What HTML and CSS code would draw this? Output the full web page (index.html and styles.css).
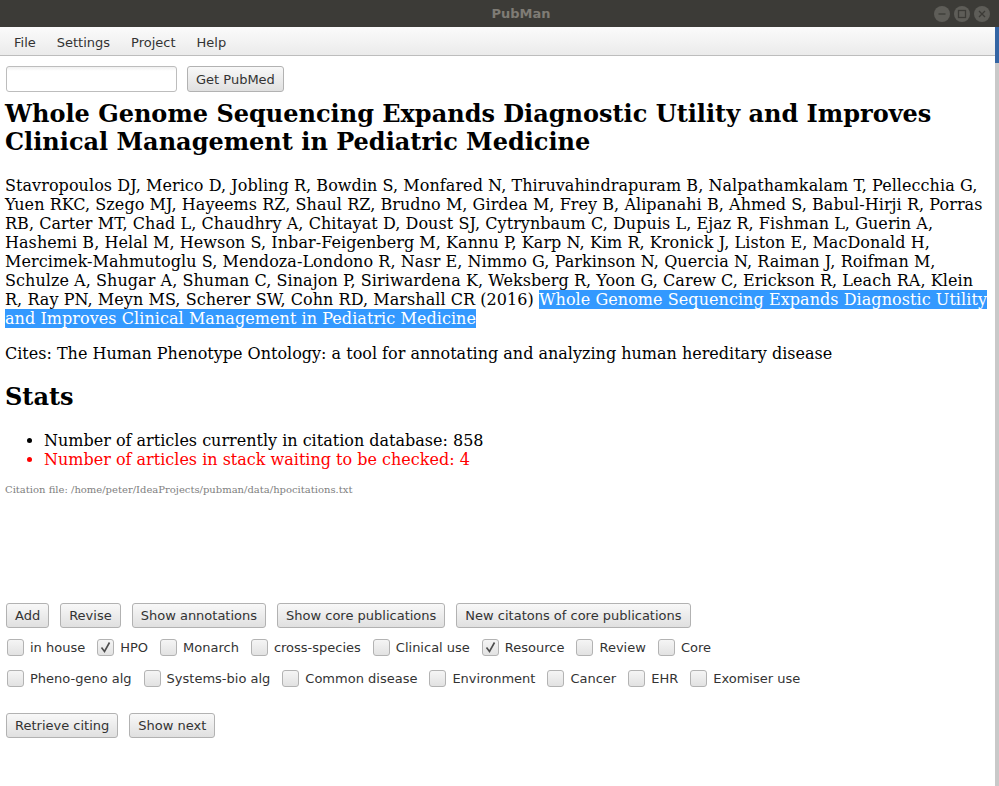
FILE: index.html
```html
<!DOCTYPE html>
<html>
<head>
<meta charset="utf-8">
<title>PubMan</title>
<link rel="stylesheet" href="styles.css">
</head>
<body>
<div class="screen">
  <div class="window">
    <div class="titlebar">
      <span class="title">PubMan</span>
      <div class="wbtns">
        <span class="wbtn"><svg width="16" height="16" viewBox="0 0 16 16"><path d="M4.5 8h7" stroke="#3c3b37" stroke-width="1.3"/></svg></span>
        <span class="wbtn"><svg width="16" height="16" viewBox="0 0 16 16"><rect x="4.5" y="4.5" width="7" height="7" fill="none" stroke="#3c3b37" stroke-width="1.3"/></svg></span>
        <span class="wbtn"><svg width="16" height="16" viewBox="0 0 16 16"><path d="M5 5l6 6M11 5l-6 6" stroke="#3c3b37" stroke-width="1.3"/></svg></span>
      </div>
    </div>
    <div class="menubar">
      <span class="menu">File</span>
      <span class="menu">Settings</span>
      <span class="menu">Project</span>
      <span class="menu">Help</span>
    </div>
    <div class="toolbar">
      <input class="field" type="text">
      <button class="btn tall">Get PubMed</button>
    </div>
    <div class="webview">
      <h1 class="art-title">Whole Genome Sequencing Expands Diagnostic Utility and Improves Clinical Management in Pediatric Medicine</h1>
      <p class="authors">Stavropoulos DJ, Merico D, Jobling R, Bowdin S, Monfared N, Thiruvahindrapuram B, Nalpathamkalam T, Pellecchia G, Yuen RKC, Szego MJ, Hayeems RZ, Shaul RZ, Brudno M, Girdea M, Frey B, Alipanahi B, Ahmed S, Babul-Hirji R, Porras RB, Carter MT, Chad L, Chaudhry A, Chitayat D, Doust SJ, Cytrynbaum C, Dupuis L, Ejaz R, Fishman L, Guerin A, Hashemi B, Helal M, Hewson S, Inbar-Feigenberg M, Kannu P, Karp N, Kim R, Kronick J, Liston E, MacDonald H, Mercimek-Mahmutoglu S, Mendoza-Londono R, Nasr E, Nimmo G, Parkinson N, Quercia N, Raiman J, Roifman M, Schulze A, Shugar A, Shuman C, Sinajon P, Siriwardena K, Weksberg R, Yoon G, Carew C, Erickson R, Leach RA, Klein R, Ray PN, Meyn MS, Scherer SW, Cohn RD, Marshall CR (2016) <span class="sel">Whole Genome Sequencing Expands Diagnostic Utility and Improves Clinical Management in Pediatric Medicine</span></p>
      <p class="cites">Cites: The Human Phenotype Ontology: a tool for annotating and analyzing human hereditary disease</p>
      <h2 class="stats">Stats</h2>
      <ul class="statlist">
        <li>Number of articles currently in citation database: 858</li>
        <li class="warn">Number of articles in stack waiting to be checked: 4</li>
      </ul>
      <p class="citefile">Citation file: /home/peter/IdeaProjects/pubman/data/hpocitations.txt</p>
    </div>
    <div class="controls">
      <div class="btnrow">
        <button class="btn">Add</button>
        <button class="btn">Revise</button>
        <button class="btn">Show annotations</button>
        <button class="btn">Show core publications</button>
        <button class="btn">New citatons of core publications</button>
      </div>
      <div class="checkrow first">
        <label class="chk"><span class="box"></span>in house</label>
        <label class="chk"><span class="box on"><svg width="15" height="15" viewBox="0 0 15 15"><path d="M3.5 7.5l3 4 5-9" fill="none" stroke="#4d4d4d" stroke-width="1.6"/></svg></span>HPO</label>
        <label class="chk"><span class="box"></span>Monarch</label>
        <label class="chk"><span class="box"></span>cross-species</label>
        <label class="chk"><span class="box"></span>Clinical use</label>
        <label class="chk"><span class="box on"><svg width="15" height="15" viewBox="0 0 15 15"><path d="M3.5 7.5l3 4 5-9" fill="none" stroke="#4d4d4d" stroke-width="1.6"/></svg></span>Resource</label>
        <label class="chk"><span class="box"></span>Review</label>
        <label class="chk"><span class="box"></span>Core</label>
      </div>
      <div class="checkrow second">
        <label class="chk"><span class="box"></span>Pheno-geno alg</label>
        <label class="chk"><span class="box"></span>Systems-bio alg</label>
        <label class="chk"><span class="box"></span>Common disease</label>
        <label class="chk"><span class="box"></span>Environment</label>
        <label class="chk"><span class="box"></span>Cancer</label>
        <label class="chk"><span class="box"></span>EHR</label>
        <label class="chk"><span class="box"></span>Exomiser use</label>
      </div>
      <div class="btnrow bottom">
        <button class="btn">Retrieve citing</button>
        <button class="btn">Show next</button>
      </div>
    </div>
  </div>
  <div class="sliver"></div>
</div>
</body>
</html>
```

FILE: styles.css
```css
* { box-sizing: border-box; }
html, body { margin: 0; padding: 0; }
body { width: 999px; height: 786px; overflow: hidden; background: #fff; }

.screen { display: flex; width: 999px; height: 786px; }
.window { width: 995px; height: 786px; display: flex; flex-direction: column; background: #fff; font-family: "DejaVu Sans", sans-serif; font-size: 13px; color: #333; }
.sliver { width: 4px; height: 786px; background: linear-gradient(to bottom, #3c3b37 0, #3c3b37 27px, #3465a4 27px, #3465a4 63px, #c9c9c9 63px, #c9c9c9 100%); }

.titlebar { height: 27px; background: #3c3b37; display: flex; align-items: center; flex-shrink: 0; }
.title { flex: 1; text-align: center; padding-left: 108px; color: #7f7c75; font-weight: bold; font-size: 13px; }
.wbtns { display: flex; gap: 4px; padding-right: 5px; }
.wbtn { width: 16px; height: 16px; border-radius: 50%; background: #5e5d58; display: flex; }

.menubar { height: 29px; background: linear-gradient(to bottom, #fbfbfb, #ebebeb); border-bottom: 1px solid #bdbdbd; display: flex; align-items: center; padding-left: 3.5px; padding-top: 2px; flex-shrink: 0; }
.menu { padding: 0 10.5px; color: #333; }

.toolbar { display: flex; align-items: flex-start; gap: 10px; padding: 10px 6px 0; height: 40px; flex-shrink: 0; }
.field { width: 171px; height: 26px; border: 1px solid #bdbdbd; border-radius: 3px; background: linear-gradient(to bottom, #f0f0f0 0, #fff 4px); margin: 0; padding: 0 6px; }

.btn { font-family: "DejaVu Sans", sans-serif; font-size: 13px; color: #333; height: 25px; padding: 0 8px; margin: 0; border: 1px solid #b2b2b2; border-radius: 3px; background: linear-gradient(to bottom, #f8f8f8, #e0e0e0); line-height: 23px; }
.btn.tall { height: 26px; }

.webview { height: 497px; flex-shrink: 0; padding: 0 7px 0 5px; font-family: "DejaVu Serif", serif; color: #000; font-size: 16px; overflow: hidden; }
.art-title { font-size: 24px; line-height: 28px; font-weight: bold; margin: 4px 0 0; }
.authors { margin: 20px 0 0; line-height: 19px; letter-spacing: 0.06px; }
.sel { background: #3399ff; color: #fff; }
.cites { margin: 16px 0 0; line-height: 19px; }
.stats { font-size: 24px; line-height: 28px; font-weight: bold; margin: 20px 0 0; }
.statlist { margin: 20px 0 0; padding-left: 39px; line-height: 19px; }
.warn { color: #ff0000; }
.citefile { margin: 15px 0 0; font-size: 10px; line-height: 12px; color: #808080; }

.controls { padding: 10px 6px 0; }
.btnrow { display: flex; gap: 11px; }
.btnrow.bottom { margin-top: 26px; }
.checkrow { display: flex; align-items: center; gap: 12px; padding-left: 1px; height: 17px; }
.checkrow.first { margin-top: 11px; }
.checkrow.second { margin-top: 14px; }
.chk { display: flex; align-items: center; gap: 6px; color: #333; }
.box { width: 17px; height: 17px; border: 1px solid #b3b3b3; border-radius: 3px; background: linear-gradient(to bottom, #f5f5f5, #e2e2e2); display: flex; align-items: center; justify-content: center; }
```
